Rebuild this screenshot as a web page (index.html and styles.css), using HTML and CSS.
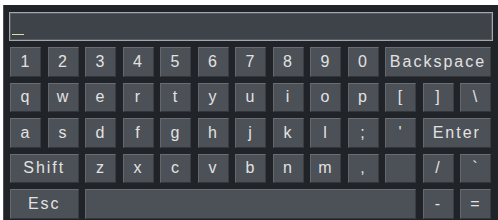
FILE: index.html
```html
<!DOCTYPE html>
<html lang="en">
<head>
  <meta charset="UTF-8" />
  <title>Keyboard</title>
  <link rel="stylesheet" href="styles.css">
</head>
<body>

<div class="panel">
  <div class="input-box"><span class="cursor"></span></div>

  <div class="keys">
    <div class="key">1</div>
    <div class="key">2</div>
    <div class="key">3</div>
    <div class="key">4</div>
    <div class="key">5</div>
    <div class="key">6</div>
    <div class="key">7</div>
    <div class="key">8</div>
    <div class="key">9</div>
    <div class="key">0</div>
    <div class="key wide3">Backspace</div>

    <div class="key">q</div>
    <div class="key">w</div>
    <div class="key">e</div>
    <div class="key">r</div>
    <div class="key">t</div>
    <div class="key">y</div>
    <div class="key">u</div>
    <div class="key">i</div>
    <div class="key">o</div>
    <div class="key">p</div>
    <div class="key">[</div>
    <div class="key">]</div>
    <div class="key">\</div>

    <div class="key">a</div>
    <div class="key">s</div>
    <div class="key">d</div>
    <div class="key">f</div>
    <div class="key">g</div>
    <div class="key">h</div>
    <div class="key">j</div>
    <div class="key">k</div>
    <div class="key">l</div>
    <div class="key">;</div>
    <div class="key">'</div>
    <div class="key wide2">Enter</div>

    <div class="key wide2">Shift</div>
    <div class="key">z</div>
    <div class="key">x</div>
    <div class="key">c</div>
    <div class="key">v</div>
    <div class="key">b</div>
    <div class="key">n</div>
    <div class="key">m</div>
    <div class="key">,</div>
    <div class="key"></div>
    <div class="key">/</div>
    <div class="key">`</div>

    <div class="key wide2">Esc</div>
    <div class="key space"></div>
    <div class="key">-</div>
    <div class="key">=</div>
  </div>
</div>

</body>
</html>
```

FILE: styles.css
```css
body {
  margin: 0;
  background: #fff;
  font-family: "Liberation Sans", Arial, sans-serif;
  overflow: hidden;
}
.panel {
  margin: 5px 0 0 3px;
  width: 495px;
  height: 215px;
  box-sizing: border-box;
  padding: 7px 0 0 6px;
  background: #202328;
  border-left: 1px solid #4c5056;
}
.input-box {
  position: relative;
  width: 482px;
  height: 27px;
  background: #3e4349;
  border: 1px solid #a4a8ad;
  box-shadow: inset 0 0 0 1px #565b61;
  margin-left: -1px;
}
.cursor {
  position: absolute;
  left: 2px;
  top: 21px;
  width: 12px;
  height: 1px;
  background: #e4dc9c;
}
.keys {
  display: grid;
  grid-template-columns: repeat(13, 31px);
  grid-auto-rows: 29.5px;
  column-gap: 6.5px;
  row-gap: 6px;
  margin-top: 6px;
}
.key {
  display: flex;
  align-items: center;
  justify-content: center;
  background: #4c5057;
  border-top: 1px solid #6a6e74;
  border-left: 1px solid #64686e;
  border-right: 1px solid #3a3d42;
  border-bottom: 1px solid #33363a;
  color: #e2e2e2;
  font-size: 16px;
  letter-spacing: 1px;
  box-sizing: border-box;
}
.wide2 { grid-column: span 2; letter-spacing: 2px; }
.wide3 { grid-column: span 3; letter-spacing: 2px; }
.space { grid-column: span 9; }
```
